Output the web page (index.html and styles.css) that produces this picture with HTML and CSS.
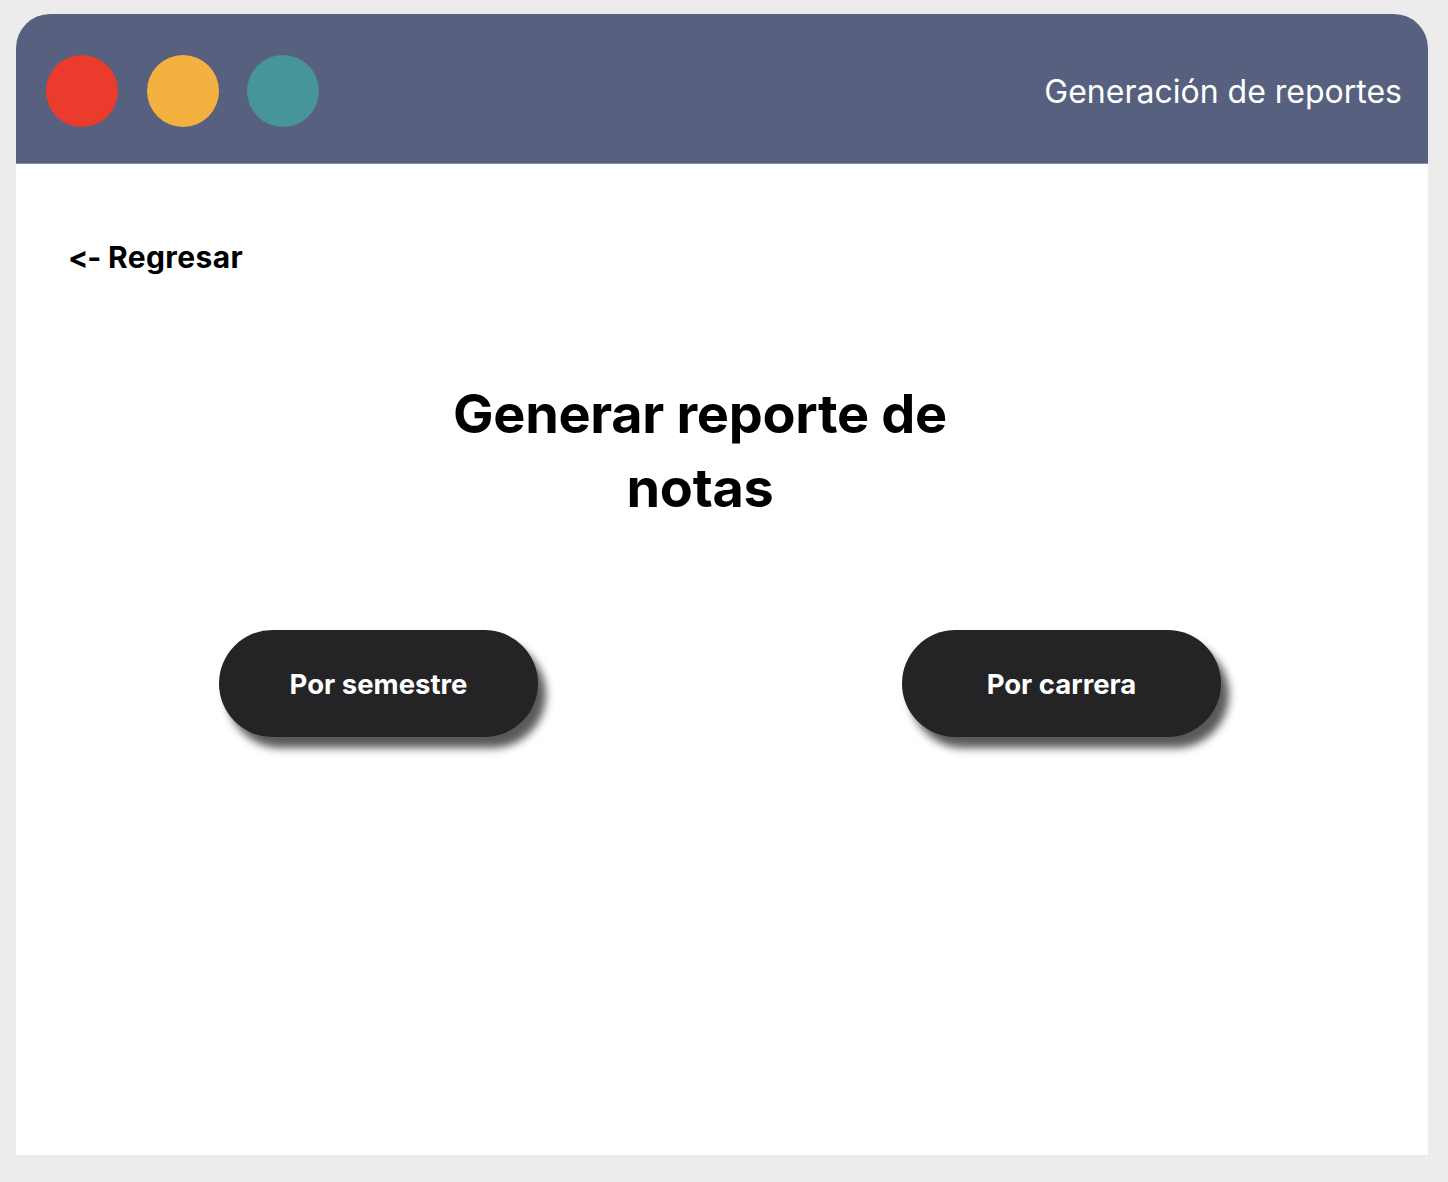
FILE: index.html
```html
<!DOCTYPE html>
<html lang="es">
<head>
<meta charset="utf-8">
<title>Generación de reportes</title>
<link rel="stylesheet" href="styles.css">
</head>
<body>
<div class="window">
  <header class="titlebar">
    <div class="dots">
      <span class="dot dot-red"></span>
      <span class="dot dot-yellow"></span>
      <span class="dot dot-teal"></span>
    </div>
    <div class="app-title">Generación de reportes</div>
  </header>
  <main class="content">
    <a class="back" href="#"><span class="back-arrow">&lt;-</span> Regresar</a>
    <div class="heading-wrap">
      <h1 class="heading">Generar reporte de<br>notas</h1>
    </div>
    <div class="actions">
      <button class="pill">Por semestre</button>
      <button class="pill">Por carrera</button>
    </div>
  </main>
</div>
</body>
</html>
```

FILE: styles.css
```css
html, body {
  margin: 0;
  padding: 0;
}
body {
  background: #ececec;
  padding: 14px 20px 27px 16px;
  font-family: Inter, "Noto Sans", sans-serif;
  font-feature-settings: "calt" 0, "liga" 0;
  font-variant-ligatures: none;
}
.window {
  height: 1141px;
  background: #ffffff;
  border-radius: 34px 34px 0 0;
  overflow: hidden;
  display: flex;
  flex-direction: column;
}
.titlebar {
  flex: none;
  background: #57607e;
  border-bottom: 1px solid #8a90a8;
  display: flex;
  align-items: center;
  justify-content: space-between;
  padding: 5px 26px 0 30px;
  box-sizing: border-box;
  height: 150px;
}
.dots {
  display: flex;
  gap: 28.5px;
}
.dot {
  width: 72px;
  height: 72px;
  border-radius: 50%;
  display: block;
}
.dot-red { background: #ea3b2c; }
.dot-yellow { background: #f3b13f; }
.dot-teal { background: #45959a; }
.app-title {
  color: #ffffff;
  font-size: 32px;
  font-weight: 400;
  margin-top: 1px;
}
.content {
  flex: 1;
  padding: 73px 0 0 52px;
  display: flex;
  flex-direction: column;
}
.back {
  color: #000;
  text-decoration: none;
  font-weight: 700;
  font-size: 30px;
  letter-spacing: 0.4px;
  line-height: 40px;
  align-self: flex-start;
}
.back-arrow {
  letter-spacing: -1px;
}
.heading-wrap {
  display: flex;
  justify-content: center;
  margin: 100px 96px 0 0;
}
.heading {
  margin: 0;
  text-align: center;
  font-size: 54px;
  line-height: 74px;
  font-weight: 700;
  color: #000;
  letter-spacing: -0.3px;
}
.actions {
  display: flex;
  gap: 364px;
  margin: 105px 0 0 151px;
}
.pill {
  width: 319px;
  height: 107px;
  border: none;
  border-radius: 54px;
  background: #242426;
  color: #ffffff;
  font-family: inherit;
  font-feature-settings: "calt" 0;
  font-weight: 700;
  font-size: 27.5px;
  box-shadow: 8px 11px 9px rgba(0, 0, 0, 0.65);
  cursor: pointer;
}
```
